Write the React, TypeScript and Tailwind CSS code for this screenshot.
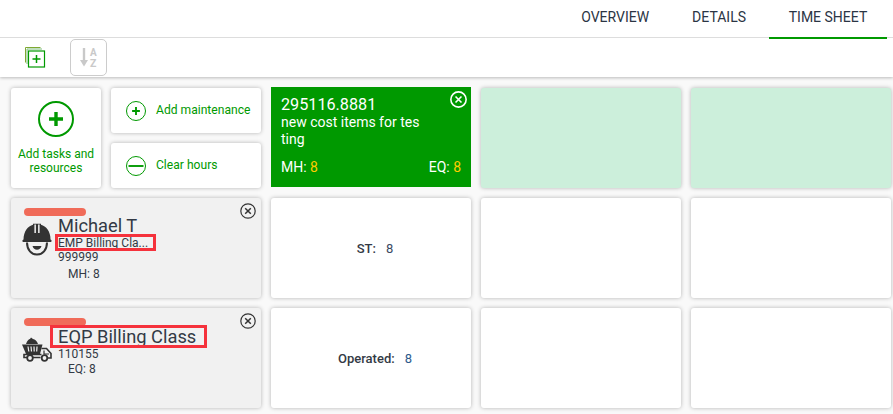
import { ReactNode } from "react";

const GREEN = "#009900";

function CloseIcon({ color = "#333333", size = 16, weight = 1.2 }: { color?: string; size?: number; weight?: number }) {
  return (
    <svg width={size} height={size} viewBox="0 0 16 16" fill="none" stroke={color}>
      <circle cx="8" cy="8" r="7.2" strokeWidth={weight} />
      <path d="M5.200 5.200l5.600 5.600M10.800 5.200l-5.600 5.600" strokeWidth="1.500" />
    </svg>
  );
}

function CircleIcon({ size, minus, stroke }: { size: number; minus?: boolean; stroke: number }) {
  return (
    <svg width={size} height={size} viewBox="0 0 36 36" fill="none" stroke={GREEN}>
      <circle cx="18" cy="18" r={18 - stroke / 2} strokeWidth={stroke} />
      <path d={minus ? "M4.500 18h27" : "M18 11v14M11 18h14"} strokeWidth="3.400" />
    </svg>
  );
}

function HardHat() {
  return (
    <svg width="30" height="33" viewBox="0 0 30 33">
      <path d="M1.500 16.500C1.500 8.500 6 3 11 1.800V.8h8v1C24 3 28.500 8.500 28.500 16.500c1.200.4 1.500 1.700.6 2.500H.9c-.9-.8-.6-2.100.6-2.500z" fill="#333333" />
      <path d="M12.400 1.500h1.500v8.500h-1.500zM16.100 1.500h1.500v8.500h-1.500z" fill="#f1f1f1" />
      <path d="M5 19.500c0 7.500 4.500 12 10 12s10-4.500 10-12" fill="none" stroke="#333333" strokeWidth="2" />
      <path d="M10.500 23h9c-.8 2.600-2.400 3.800-4.500 3.800s-3.700-1.200-4.500-3.800z" fill="#333333" />
    </svg>
  );
}

function Truck() {
  return (
    <svg width="30" height="25" viewBox="0 0 30 25">
      <path d="M4 7C5 3.500 7 2 8 2l1-1.500 2 1.500c2 .2 4 2 5 5z" fill="#333333" />
      <path d="M0 7.500h20.500l-2.500 9.500H4z" fill="#333333" />
      <path d="M6 9.500l.8 5M9 9.500l.5 5M12 9.500l.2 5M15 9.500l-.3 5" stroke="#f1f1f1" strokeWidth="1.200" />
      <path d="M19.500 11.500h5l4.500 5v4.500h-3.500M18.500 20.500h-7.500M5 20.500H2v-3h17.500" fill="none" stroke="#333333" strokeWidth="1.600" />
      <path d="M22 13.500v3.500h5" fill="none" stroke="#333333" strokeWidth="1.200" />
      <circle cx="8" cy="21" r="2.800" fill="#f1f1f1" stroke="#333333" strokeWidth="1.800" />
      <circle cx="22.500" cy="21" r="2.800" fill="#f1f1f1" stroke="#333333" strokeWidth="1.800" />
    </svg>
  );
}

function Card({ className, children }: { className: string; children?: ReactNode }) {
  return (
    <div className={`relative rounded-[3px] shadow-[0_0_4px_rgba(0,0,0,0.28)] ${className}`}>
      {children}
    </div>
  );
}

function ActionRow({ minus, label }: { minus?: boolean; label: string }) {
  return (
    <Card className="h-[45px] bg-white flex items-center pl-[15px] gap-[10px]">
      <CircleIcon size={20} minus={minus} stroke={1.8} />
      <span className="text-[12.100px] text-[#009900] -mt-[1px]">{label}</span>
    </Card>
  );
}

function ResourceCard({
  icon,
  highlight,
  lines,
}: {
  icon: ReactNode;
  highlight: ReactNode;
  lines: ReactNode;
}) {
  return (
    <Card className="w-[250px] h-[100px] bg-[#f1f1f1] pl-[13px] pt-[10px] text-[#333a45]">
      <div className="w-[62px] h-[8px] rounded-[4px] bg-[#f06b59]" />
      <div className="absolute right-[5px] top-[5px]">
        <CloseIcon />
      </div>
      <div className="flex">
        <div className="w-[36px] shrink-0 -ml-[2px] pt-[7px]">{icon}</div>
        <div className="leading-none">
          {highlight}
          {lines}
        </div>
      </div>
    </Card>
  );
}

function ValueCard({ label, value, valueColor }: { label: string; value: string; valueColor: string }) {
  return (
    <Card className="w-[200px] h-[100px] bg-white flex items-center justify-center pl-[8px] pt-[2px] text-[13px] text-[#333a45]">
      <span className="font-medium">{label}</span>
      <span className={`ml-[10px] ${valueColor}`}>{value}</span>
    </Card>
  );
}

export default function App() {
  return (
    <div className="w-[893px] h-[414px] overflow-hidden bg-[#f9f9f9] font-['Roboto',sans-serif]">
      <div className="relative z-10 h-[38px] bg-white border-b border-[#dddddd] flex justify-end pr-[6px] text-[14px] text-[#2b3544]">
        <div className="h-[38px] px-[21px] flex items-center -mt-[2px]">OVERVIEW</div>
        <div className="h-[38px] px-[22px] flex items-center -mt-[2px]">DETAILS</div>
        <div className="h-[39px] w-[118px] ml-[1px] flex items-center justify-center border-b-2 border-[#009900]">
          <span className="-mt-[2px]">TIME SHEET</span>
        </div>
      </div>

      <div className="h-[39px] bg-white shadow-[0_1px_3px_rgba(0,0,0,0.25)] flex items-center relative">
        <svg className="ml-[25px]" width="21" height="21" viewBox="0 0 21 21" fill="none" stroke={GREEN}>
          <path d="M15.500 .5H.5v15" strokeWidth="1" stroke="#7fa832" />
          <path d="M17 2H2v15" strokeWidth="1" stroke="#7fbf7f" />
          <rect x="3.500" y="4" width="16" height="16" strokeWidth="1.200" fill="#ffffff" />
          <path d="M11.500 8v8M7.500 12h8" strokeWidth="1.500" />
        </svg>
        <div className="ml-[24px] w-[37px] h-[37px] border border-[#cccccc] rounded-[5px] flex items-center justify-center relative">
          <svg width="18" height="20" viewBox="0 0 18 20">
            <path d="M4 0v15" stroke="#c9c9c9" strokeWidth="2.400" />
            <path d="M0 12h8l-4 6.500z" fill="#c9c9c9" />
            <text x="10" y="8" fontSize="10" fontWeight="700" fill="#c9c9c9" fontFamily="Roboto">A</text>
            <text x="10" y="18.500" fontSize="10.500" fontWeight="700" fill="#c9c9c9" fontFamily="Roboto">Z</text>
          </svg>
        </div>
      </div>

      <div className="pl-[11px] pt-[11px] flex flex-col gap-[10px]">
        <div className="flex gap-[10px]">
          <div className="w-[250px] flex gap-[10px]">
            <Card className="w-[90px] h-[100px] bg-white flex flex-col items-center pt-[13px]">
              <CircleIcon size={36} stroke={2} />
              <div className="mt-[10px] text-[12px] leading-[14px] text-[#009900] text-center">
                Add tasks and
                <br />
                resources
              </div>
            </Card>
            <div className="w-[150px] flex flex-col gap-[10px]">
              <ActionRow label="Add maintenance" />
              <ActionRow minus label="Clear hours" />
            </div>
          </div>
          <div className="relative w-[200px] h-[100px] -mt-[1px] bg-[#009900] text-white pl-[10px] pt-[8px]">
            <div className="text-[16.200px] leading-[20px]">295116.8881</div>
            <div className="w-[145px] text-[14px] leading-[17px] break-all mt-[-1px]">
              new cost items for tes ting
            </div>
            <div className="absolute left-[10px] right-[10px] bottom-[11px] flex justify-between text-[14px] leading-[17px]">
              <span>
                MH: <span className="text-[#ffcc00]">8</span>
              </span>
              <span>
                EQ: <span className="text-[#ffcc00]">8</span>
              </span>
            </div>
            <div className="absolute right-[4px] top-[4px]">
              <CloseIcon color="#ffffff" size={17} weight={1.500} />
            </div>
          </div>
          <Card className="w-[200px] h-[100px] bg-[#ccefdb]" />
          <Card className="w-[200px] h-[100px] bg-[#ccefdb]" />
        </div>

        <div className="flex gap-[10px]">
          <ResourceCard
            icon={<HardHat />}
            highlight={
              <div className="relative">
                <div className="text-[18.300px] leading-[19px]">Michael T</div>
                <div className="text-[12px] leading-[14px] mt-[1px] whitespace-nowrap">EMP Billing Cla...</div>
                <div className="absolute left-[-3px] top-[18px] w-[101px] h-[17px] border-[3px] border-[#f5323c]" />
              </div>
            }
            lines={
              <>
                <div className="text-[12px] leading-[15px]">999999</div>
                <div className="text-[12px] leading-[15px] pl-[10px] mt-[2px]">MH: 8</div>
              </>
            }
          />
          <ValueCard label="ST:" value="8" valueColor="text-[#3b4a63]" />
          <Card className="w-[200px] h-[100px] bg-white" />
          <Card className="w-[200px] h-[100px] bg-white" />
        </div>

        <div className="flex gap-[10px]">
          <ResourceCard
            icon={
              <div className="pt-[4px]">
                <Truck />
              </div>
            }
            highlight={
              <div className="relative mt-[1px]">
                <div className="text-[18.300px] leading-[19px]">EQP Billing Class</div>
                <div className="absolute left-[-8px] top-[-2px] w-[157px] h-[23px] border-[3px] border-[#f5323c]" />
              </div>
            }
            lines={
              <>
                <div className="text-[12px] leading-[15px] mt-[1px]">110155</div>
                <div className="text-[12px] leading-[15px] pl-[10px]">EQ: 8</div>
              </>
            }
          />
          <ValueCard label="Operated:" value="8" valueColor="text-[#2d5a8c]" />
          <Card className="w-[200px] h-[100px] bg-white" />
          <Card className="w-[200px] h-[100px] bg-white" />
        </div>
      </div>
    </div>
  );
}
